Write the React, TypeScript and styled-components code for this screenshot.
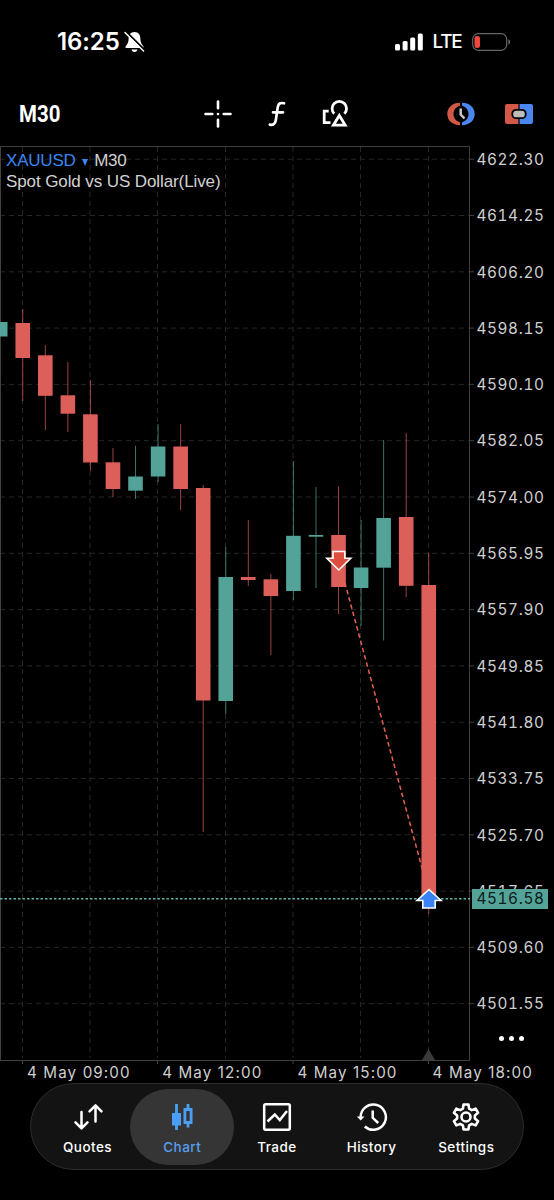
import React from "react";
import styled, { createGlobalStyle } from "styled-components";

const RED = "#dd5f59";
const GREEN = "#53a398";
const BLUE = "#4b86f0";

const Global = createGlobalStyle`
  * { box-sizing: border-box; }
  body { margin: 0; background: #000; }
`;

const Screen = styled.div`
  position: relative;
  width: 554px;
  height: 1200px;
  overflow: hidden;
  display: flex;
  flex-direction: column;
  background: #000;
  color: #fff;
  font-family: Inter, "Liberation Sans", sans-serif;
`;

const StatusBar = styled.header`
  height: 84px;
  display: flex;
  justify-content: space-between;
  align-items: center;
  padding: 0 43.5px 0 57px;
`;

const StatusGroup = styled.div<{ $gap: number }>`
  display: flex;
  align-items: center;
  gap: ${(p) => p.$gap}px;
`;

const Clock = styled.span`
  width: 62px;
  white-space: nowrap;
  font-size: 24px;
  line-height: 30px;
  font-weight: 600;
  letter-spacing: -0.1px;
`;

const Network = styled.span`
  width: 28px;
  margin-right: 1px;
  white-space: nowrap;
  font-size: 19px;
  line-height: 24px;
  font-weight: 500;
  letter-spacing: -1.3px;
`;

const Toolbar = styled.nav`
  height: 62px;
  display: flex;
  align-items: center;
  padding: 0 20px 2px 19px;
`;

const Timeframe = styled.span`
  width: 184px;
  font-family: Roboto, sans-serif;
  font-size: 23.5px;
  line-height: 30px;
  font-weight: 700;
  transform: scaleX(0.87);
  transform-origin: left center;
`;

const ToolGroup = styled.div<{ $gap: number; $push?: boolean }>`
  display: flex;
  align-items: center;
  gap: ${(p) => p.$gap}px;
  margin-left: ${(p) => (p.$push ? "auto" : "0")};
`;

const ChartArea = styled.main`
  height: 914px;
  display: flex;
`;

const Plot = styled.section`
  position: relative;
  width: 470px;
  flex: none;
`;

const PlotSvg = styled.svg`
  display: block;
`;

const Legend = styled.div`
  position: absolute;
  left: 6px;
  top: 4px;
  font-family: "Liberation Sans", sans-serif;
  font-size: 17px;
  line-height: 21px;
  color: #d2d2d2;
  white-space: nowrap;
`;

const LegendRow = styled.div<{ $spacing: number }>`
  display: flex;
  align-items: center;
  letter-spacing: ${(p) => p.$spacing}px;
`;

const Symbol = styled.span`
  color: #3c85f3;
`;

const Caret = styled.span`
  margin: 3px 6.5px 0 6px;
  border: 3.5px solid transparent;
  border-top: 7px solid #3c85f3;
  border-bottom: 0;
`;

const PriceAxis = styled.aside`
  position: relative;
  flex: 1;
  height: 868.5px;
  padding: 4px 0 0 6.5px;
  display: flex;
  flex-direction: column;
  justify-content: space-between;
`;

const axisText = `
  line-height: 20px;
  white-space: nowrap;
`;

const Price = styled.span`
  ${axisText}
  font-size: 15.3px;
  font-variant-numeric: tabular-nums;
  color: #cfcfcf;
  letter-spacing: 0.62px;
`;

const PriceTag = styled(Price)`
  position: absolute;
  left: 2px;
  top: 743px;
  width: 76px;
  padding-left: 4.5px;
  background: ${GREEN};
  color: #0c1d1b;
`;

const MoreButton = styled.div`
  position: absolute;
  left: 29px;
  top: 889.5px;
  display: flex;
  gap: 5px;
`;

const Dot = styled.i`
  width: 5px;
  height: 5px;
  border-radius: 50%;
  background: #fff;
`;

const TimeAxis = styled.div`
  height: 23px;
  display: flex;
  padding: 3px 0 0 27px;
`;

const Time = styled.span`
  ${axisText}
  flex: 0 0 135.2px;
  font-size: 15.2px;
  color: #cfcfcf;
  letter-spacing: 1.12px;
`;

const TabBar = styled.nav`
  width: 494.5px;
  height: 87px;
  margin-left: 29.5px;
  padding: 5px;
  display: flex;
  border: 1px solid #2c2c2c;
  border-radius: 44px;
  background: #131313;
`;

const Tab = styled.button<{ $active?: boolean }>`
  flex: 0 0 104px;
  height: 76px;
  margin-right: -9.3px;
  padding: 12px 0 0;
  display: flex;
  flex-direction: column;
  align-items: center;
  gap: 3px;
  border: 0;
  border-radius: 38px;
  background: ${(p) => (p.$active ? "#353535" : "transparent")};
  color: ${(p) => (p.$active ? "#559ff0" : "#fff")};
  font: 500 13.5px/22px Inter, sans-serif;
  letter-spacing: 0.45px;
`;

type Candle = [high: number, top: number, bottom: number, low: number, up?: 1];

const candles: Candle[] = [
  [322, 322, 336.5, 336.5, 1],
  [309, 323, 358, 401],
  [345, 355.3, 395.8, 430],
  [362, 395.3, 413.7, 432],
  [380, 414.3, 462.5, 471],
  [448, 462.3, 489, 497],
  [446, 476.5, 490.7, 499, 1],
  [424, 446.5, 476.5, 482, 1],
  [424, 446.5, 489, 510],
  [485, 488, 700.5, 832],
  [547, 577, 701, 714, 1],
  [520, 577, 580, 586],
  [574, 579.3, 596, 655],
  [461, 535.8, 591, 600, 1],
  [487, 535, 536.7, 588, 1],
  [486.5, 535, 587, 614],
  [520, 567.5, 588, 626, 1],
  [440, 518, 567.7, 640.5, 1],
  [433, 517, 585.8, 597],
  [553, 585, 896, 914],
];

const columns = [22.5, 90, 157.5, 225.5, 293, 360.5, 428.5];
const rows = Array.from({ length: 16 }, (_, i) => 159.2 + i * 56.3);
const prices = [
  "4622.30", "4614.25", "4606.20", "4598.15", "4590.10", "4582.05", "4574.00", "4565.95",
  "4557.90", "4549.85", "4541.80", "4533.75", "4525.70", "4517.65", "4509.60", "4501.55",
];
const times = ["4 May 09:00", "4 May 12:00", "4 May 15:00", "4 May 18:00"];

const CandleChart = () => (
  <PlotSvg width="476" height="920" viewBox="0 146 476 920" overflow="visible">
    <g stroke="#262626" strokeDasharray="5 4">
      {columns.map((x) => <path key={x} d={`M${x} 147V1058`} />)}
      {rows.map((y) => <path key={y} d={`M0 ${y}H469`} />)}
    </g>
    <path d="M.5 1060V146.5H469.5V1060.5H0" fill="none" stroke="#404040" />
    <g stroke="#404040">
      {rows.map((y) => <path key={y} d={`M470 ${y}h4`} />)}
      {columns.filter((_, i) => i % 2 === 0).map((x) => <path key={x} d={`M${x} 1060v4`} />)}
    </g>
    <path d="M422 1060l6.5-11 6.5 11z" fill="#3a3a3a" />
    {candles.map(([high, top, bottom, low, up], i) => {
      const x = 0.2 + i * 22.555;
      const color = up ? GREEN : RED;
      return (
        <g key={i}>
          <path d={`M${x} ${high}V${low}`} stroke={color} strokeOpacity=".7" />
          <rect x={x - 7.3} y={top} width="14.6" height={bottom - top} fill={color} />
        </g>
      );
    })}
    <path d="M0 898.7H470" stroke="#62b3a7" strokeWidth="1.5" strokeDasharray="2.5 2" />
    <path d="M339 561L428.5 892" stroke="#e6604f" strokeWidth="1.5" strokeDasharray="4.5 3" />
    <path d="M333 551.5h11.8v6.8h6l-12 11.7-12-11.7h6.2z" fill="#dc4f40" stroke="#fff" strokeWidth="1.6" />
    <path d="M429 889.5l12 11h-5.8v7.5h-12.4v-7.5h-5.8z" fill="#3983f6" stroke="#fff" strokeWidth="1.6" />
  </PlotSvg>
);

const BellOff = () => (
  <svg width="21" height="22" viewBox="0 0 21 22">
    <path d="M10.5 1C6.2 1 4.7 4.2 4.6 8c-.1 3.500-1 5-3 7.200V17h17.800v-1.800c-2-2.200-2.900-3.700-3-7.200C16.300 4.200 14.800 1 10.500 1zM7.500 18.500h6c-.3 1.600-1.400 2.500-3 2.500s-2.700-.9-3-2.500z" fill="#fff" />
    <path d="M2 .5L21 19.500" stroke="#000" strokeWidth="2" />
    <path d="M1 1.500L19.500 20" stroke="#fff" strokeWidth="1.500" strokeLinecap="round" />
  </svg>
);

const Signal = () => (
  <svg width="28" height="18" viewBox="0 0 28 18" fill="#fff">
    <rect x="0" y="11" width="5" height="6.500" rx="1.500" />
    <rect x="7.600" y="8" width="5" height="9.500" rx="1.500" />
    <rect x="15.200" y="4.500" width="5" height="13" rx="1.500" />
    <rect x="22.800" y=".5" width="5" height="17" rx="1.500" />
  </svg>
);

const Battery = () => (
  <svg width="39" height="18" viewBox="0 0 39 18">
    <rect x=".7" y=".7" width="34" height="16.600" rx="5.500" fill="none" stroke="#666" strokeWidth="1.200" />
    <rect x="2.500" y="3" width="5.500" height="12" rx="2.300" fill="#ee4740" />
    <path d="M36.500 6.300c2 .8 2 4.600 0 5.400z" fill="#777" />
  </svg>
);

const Crosshair = () => (
  <svg width="30" height="30" viewBox="0 0 30 30" stroke="#fff" strokeWidth="2.600" strokeLinecap="round">
    <path d="M2.500 15h6.800M20.700 15h6.800M15 2.500v6.800M15 20.700v6.800M15 15v.01" />
  </svg>
);

const FunctionIcon = () => (
  <svg width="18" height="28" viewBox="0 0 18 28" fill="none" stroke="#fff" strokeWidth="2.700" strokeLinecap="round">
    <path d="M16 3.300c-3.800-1-5.600.3-6.200 3.600L7.800 20.300c-.6 3.600-2.600 5-6 4.300M5 12.300h10" />
  </svg>
);

const Shapes = () => (
  <svg width="28" height="30" viewBox="0 0 28 30" fill="none" stroke="#fff" strokeWidth="2.800">
    <path d="M13.200 14.700A7.200 7.200 0 1 1 23.400 14.700" />
    <path d="M7.700 12.200H3.200v11.500h6.300" />
    <path d="M18.300 16.500l-5.900 9.700h11.800z" />
  </svg>
);

const ClockSplit = () => (
  <svg width="28" height="24" viewBox="0 0 28 24">
    <path d="M13 .8C5.500.8.300 5.500.300 12S5.500 23.200 13 23.200v-3C9 19 6.500 16 6.500 12S9 5 13 3.800z" fill="#d25849" />
    <path d="M15 .8C22.500.8 27.700 5.500 27.700 12S22.500 23.200 15 23.200v-3c4-1.200 6.500-4.200 6.500-8.200S19 5 15 3.800z" fill={BLUE} />
    <path d="M13.700 6.500v6l3.800 4" fill="none" stroke="#c9c9c9" strokeWidth="2.500" />
  </svg>
);

const OneClick = () => (
  <svg width="30" height="22" viewBox="0 0 30 22">
    <path d="M14.400 1H3Q1 1 1 3v16Q1 21 3 21h11.400z" fill="#d25849" />
    <path d="M15.600 1H27Q29 1 29 3v16q0 2-2 2H15.600z" fill={BLUE} />
    <rect x="8.300" y="6.800" width="13.400" height="8.400" rx="3.800" fill="#bdbdbd" stroke="#000" strokeWidth="1.800" />
  </svg>
);

const QuotesIcon = () => (
  <svg width="32" height="32" viewBox="0 0 32 32" fill="none" stroke="#fff" strokeWidth="2.500" strokeLinecap="round" strokeLinejoin="round">
    <path d="M9.500 11v16M3.500 21.300l6 6 6-6M23.500 20.500v-16M17.500 10.300l6-6 6 6" />
  </svg>
);

const ChartIcon = () => (
  <svg width="32" height="32" viewBox="0 0 32 32" fill="none" stroke="#4a9ff5" strokeWidth="2.800">
    <path d="M10.500 3v26M22 3v5M22 22v4.500" />
    <path d="M6 12h9v12.500h-9z" fill="#4a9ff5" stroke="none" />
    <path d="M18.900 8.500h6.200v13h-6.200z" />
  </svg>
);

const TradeIcon = () => (
  <svg width="32" height="32" viewBox="0 0 32 32" fill="none" stroke="#fff" strokeWidth="2.500">
    <rect x="3.200" y="3.200" width="25.600" height="25.600" rx="1.500" />
    <path d="M6.500 20.500l7.300-7 5 5.500L26 10" />
  </svg>
);

const HistoryIcon = () => (
  <svg width="32" height="32" viewBox="0 0 32 32" fill="none" stroke="#fff" strokeWidth="2.500">
    <path d="M4.700 17A12.600 12.600 0 1 1 8.800 25.500" />
    <path d="M.8 15.500h7.800L4.700 19.500z" fill="#fff" stroke="none" />
    <path d="M16.700 9.500v7.300l5.500 5.200" />
  </svg>
);

const polar = (radius: number, degrees: number) => {
  const a = (degrees * Math.PI) / 180;
  return `${(16 + radius * Math.sin(a)).toFixed(2)},${(16 - radius * Math.cos(a)).toFixed(2)}`;
};

const gearPoints = [0, 60, 120, 180, 240, 300]
  .flatMap((a) => [polar(9, a - 20), polar(12.8, a - 11), polar(12.8, a + 11), polar(9, a + 20)])
  .join(" ");

const SettingsIcon = () => (
  <svg width="32" height="32" viewBox="0 0 32 32" fill="none" stroke="#fff" strokeWidth="2.600" strokeLinejoin="round">
    <polygon points={gearPoints} />
    <circle cx="16" cy="16" r="4.500" />
  </svg>
);

const tabs = [
  { label: "Quotes", Icon: QuotesIcon },
  { label: "Chart", Icon: ChartIcon, active: true },
  { label: "Trade", Icon: TradeIcon },
  { label: "History", Icon: HistoryIcon },
  { label: "Settings", Icon: SettingsIcon },
];

export default function App() {
  return (
    <Screen>
      <Global />
      <StatusBar>
        <StatusGroup $gap={5}>
          <Clock>16:25</Clock>
          <BellOff />
        </StatusGroup>
        <StatusGroup $gap={10}>
          <Signal />
          <Network>LTE</Network>
          <Battery />
        </StatusGroup>
      </StatusBar>
      <Toolbar>
        <Timeframe>M30</Timeframe>
        <ToolGroup $gap={35}>
          <Crosshair />
          <FunctionIcon />
          <Shapes />
        </ToolGroup>
        <ToolGroup $gap={29} $push>
          <ClockSplit />
          <OneClick />
        </ToolGroup>
      </Toolbar>
      <ChartArea>
        <Plot>
          <CandleChart />
          <Legend>
            <LegendRow $spacing={-0.2}>
              <Symbol>XAUUSD</Symbol>
              <Caret />
              M30
            </LegendRow>
            <LegendRow $spacing={-0.1}>Spot Gold vs US Dollar(Live)</LegendRow>
          </Legend>
        </Plot>
        <PriceAxis>
          {prices.map((price) => <Price key={price}>{price}</Price>)}
          <PriceTag>4516.58</PriceTag>
          <MoreButton><Dot /><Dot /><Dot /></MoreButton>
        </PriceAxis>
      </ChartArea>
      <TimeAxis>
        {times.map((time) => <Time key={time}>{time}</Time>)}
      </TimeAxis>
      <TabBar>
        {tabs.map(({ label, Icon, active }) => (
          <Tab key={label} $active={active}>
            <Icon />
            {label}
          </Tab>
        ))}
      </TabBar>
    </Screen>
  );
}
